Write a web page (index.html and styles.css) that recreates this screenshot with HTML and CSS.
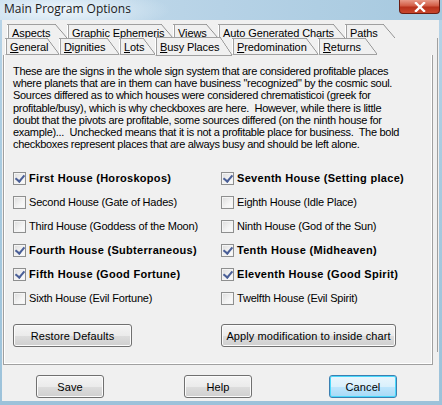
FILE: index.html
```html
<!DOCTYPE html>
<html>
<head>
<meta charset="utf-8">
<link rel="stylesheet" href="styles.css">
</head>
<body>
<div class="window">
  <div class="titlebar">
    <span class="title">Main Program Options</span>
    <span class="close"><svg width="14" height="10" viewBox="0 0 14 10"><path d="M3 1 L11 9 M11 1 L3 9" stroke="#fff" stroke-width="2.4" stroke-linecap="square"/></svg></span>
  </div>
  <div class="client">
    <div class="tabrow back">
      <span class="tab" style="width:60px">Aspects</span>
      <span class="tab" style="width:106px">Graphic Ephemeris</span>
      <span class="tab" style="width:45px">Views</span>
      <span class="tab" style="width:127px">Auto Generated Charts</span>
      <span class="tab" style="width:50px">Paths</span>
    </div>
    <div class="tabrow front">
      <span class="tab" style="width:54px"><u>G</u>eneral</span>
      <span class="tab" style="width:60px"><u>D</u>ignities</span>
      <span class="tab" style="width:36px"><u>L</u>ots</span>
      <span class="tab sel" style="width:77px"><u>B</u>usy Places</span>
      <span class="tab" style="width:86px"><u>P</u>redomination</span>
      <span class="tab" style="width:59px"><u>R</u>eturns</span>
    </div>
    <div class="panel">
      <p class="desc">These are the signs in the whole sign system that are considered profitable places<br>where planets that are in them can have business "recognized" by the cosmic soul.<br>Sources differed as to which houses were considered chrematisticoi (greek for<br>profitable/busy), which is why checkboxes are here.&nbsp; However, while there is little<br>doubt that the pivots are profitable, some sources differed (on the ninth house for<br>example)...&nbsp; Unchecked means that it is not a profitable place for business.&nbsp; The bold<br>checkboxes represent places that are always busy and should be left alone.</p>
      <div class="checks">
        <label class="chk bold"><span class="box on"></span>First House (Horoskopos)</label>
        <label class="chk bold"><span class="box on"></span>Seventh House (Setting place)</label>
        <label class="chk"><span class="box"></span>Second House (Gate of Hades)</label>
        <label class="chk"><span class="box"></span>Eighth House (Idle Place)</label>
        <label class="chk"><span class="box"></span>Third House (Goddess of the Moon)</label>
        <label class="chk"><span class="box"></span>Ninth House (God of the Sun)</label>
        <label class="chk bold"><span class="box on"></span>Fourth House (Subterraneous)</label>
        <label class="chk bold"><span class="box on"></span>Tenth House (Midheaven)</label>
        <label class="chk bold"><span class="box on"></span>Fifth House (Good Fortune)</label>
        <label class="chk bold"><span class="box on"></span>Eleventh House (Good Spirit)</label>
        <label class="chk"><span class="box"></span>Sixth House (Evil Fortune)</label>
        <label class="chk"><span class="box"></span>Twelfth House (Evil Spirit)</label>
      </div>
      <div class="panelbtns">
        <button class="btn restore">Restore Defaults</button>
        <button class="btn apply">Apply modification to inside chart</button>
      </div>
    </div>
    <div class="footer">
      <button class="btn small save">Save</button>
      <button class="btn small help">Help</button>
      <button class="btn small default">Cancel</button>
    </div>
  </div>
</div>
</body>
</html>
```
FILE: styles.css
```css
* { box-sizing: border-box; }
html, body { margin: 0; padding: 0; }
body { width: 442px; height: 405px; overflow: hidden; background: #9fc3db; }

.window {
  width: 442px; height: 405px;
  display: flex; flex-direction: column;
  background: linear-gradient(to bottom, #b8d4e8 0, #a9cbe0 40%, #9cc2da 100%);
}

.titlebar {
  height: 20px; flex: none;
  display: flex; justify-content: space-between; align-items: flex-start;
  background: radial-gradient(ellipse 110px 22px at 60px 10px, rgba(240,247,252,0.95) 0, rgba(220,235,246,0.6) 60%, rgba(200,222,238,0) 100%),
              linear-gradient(to right, #c7ddec 0, #b6d2e6 50%, #a6c9df 100%);
}
.title {
  font-family: "Open Sans", "Noto Sans", sans-serif;
  font-size: 12px; color: #1a1a1a;
  padding: 1px 0 0 4px; line-height: 16px;
}
.close {
  width: 41px; height: 14px; margin-right: 2px;
  border: 1px solid #6b1d12; border-top: none;
  border-radius: 0 0 4px 4px;
  background: linear-gradient(to bottom, #e89a88 0, #d25c45 45%, #b8321c 55%, #c9462c 100%);
  display: flex; align-items: center; justify-content: center;
}

.client {
  flex: 1;
  position: relative;
  margin: 0 3px 4px 2px;
  background: #f0f0f0;
  display: flex; flex-direction: column;
  font-family: "Liberation Sans", Arial, sans-serif;
  font-size: 11px; color: #000;
}
.client::after {
  content: ""; position: absolute; right: 1px; top: 18px; height: 314px; width: 1px;
  background: #a0a0a0;
}

.tabrow { display: flex; flex: none; }
.tabrow.back { height: 14px; margin: 4px 0 0 5px; overflow: hidden; }
.tabrow.front { height: 17px; margin: 0 0 0 3px; position: relative; z-index: 1; }

.tab {
  position: relative; flex: none;
  height: 100%;
  padding: 3px 0 0 4px;
  line-height: 13px;
  letter-spacing: -0.1px;
  border-left: 1px solid #fff;
  box-shadow: inset 1px 0 0 #a0a0a0;
  white-space: nowrap;
  background: #f0f0f0;
}
.tabrow.back .tab { padding-top: 3px; }
.tab::before {
  content: ""; position: absolute; left: -1px; top: 0; right: 12px;
  height: 1px; background: #a0a0a0;
}
.tab::after {
  content: ""; position: absolute; right: 0; top: 0; bottom: 0; width: 12px;
  background: linear-gradient(to bottom left, transparent calc(50% - 0.7px), #8c8c8c 50%, transparent calc(50% + 0.7px));
}
.tabrow.front .tab { border-bottom: 1px solid #a0a0a0; }
.tab.sel {
  height: 19px; margin-top: -1px; padding-top: 4px;
  border-bottom: none;
}
.tab u { text-decoration: underline; text-underline-offset: 1px; }

.panel {
  flex: none;
  height: 310px;
  margin: 0 6px 0 1px;
  border: 1px solid #a0a0a0;
  border-top: none;
  box-shadow: inset 1px 0 0 #fff, inset -1px -1px 0 #fff;
  display: flex; flex-direction: column;
  padding: 10px 0 0 9px;
}
.desc {
  margin: 0;
  line-height: 12.2px; letter-spacing: -0.3px;
  white-space: nowrap;
}
.checks {
  display: grid; grid-template-columns: 208px 200px;
  grid-auto-rows: 24px;
  margin-top: 16px;
}
.chk { display: flex; align-items: center; gap: 3px; letter-spacing: -0.2px; white-space: nowrap; }
.chk.bold { font-weight: bold; letter-spacing: 0.3px; }
.box {
  width: 13px; height: 13px; flex: none;
  border: 1px solid #8e8f8f;
  background: linear-gradient(135deg, #dcdcdc 0, #f4f4f4 60%, #fbfbfb 100%);
  box-shadow: inset 0 0 0 1px #f4f4f4;
  position: relative;
}
.box.on::after {
  content: ""; position: absolute; left: 3px; top: 0px;
  width: 4px; height: 7px;
  border: solid #4a5f97; border-width: 0 2px 2px 0;
  transform: rotate(40deg);
}

.btn {
  font-family: "Liberation Sans", Arial, sans-serif;
  font-size: 11px; color: #000;
  height: 23px; padding: 0;
  border: 1px solid #707070; border-radius: 3px;
  background: linear-gradient(to bottom, #f4f4f4 0, #ebebeb 50%, #dddddd 51%, #cfcfcf 100%);
  box-shadow: inset 0 0 0 1px #fbfbfb;
  letter-spacing: 0.1px;
}
.panelbtns { display: flex; gap: 89px; margin-top: 14px; }
.btn.restore { width: 119px; }
.btn.apply { width: 175px; }

.footer { display: flex; padding: 10px 0 0 34px; }
.btn.small { width: 68px; }
.btn.help { margin-left: 80px; }
.btn.default { margin-left: 77px; }
.btn.default {
  border-color: #3c7fb1;
  background: linear-gradient(to bottom, #eaf6fd 0, #d9f0fc 50%, #bee6fd 51%, #a7d9f5 100%);
  box-shadow: inset 0 0 0 1px #48d8fb;
}
```
